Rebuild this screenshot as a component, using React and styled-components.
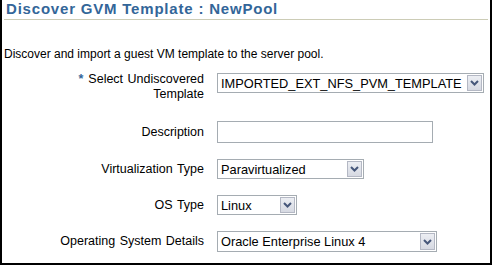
import React from 'react';
import styled, { createGlobalStyle } from 'styled-components';

const GlobalStyle = createGlobalStyle`
  html, body {
    margin: 0;
    padding: 0;
    background: #fff;
  }
  body {
    font-family: "Liberation Sans", Arial, sans-serif;
    color: #000;
  }
`;

const Frame = styled.div`
  box-sizing: border-box;
  width: 492px;
  height: 265px;
  border: 2px solid #000;
  border-top: none;
  background: #fff;
  overflow: hidden;
`;

const Title = styled.h1`
  margin: 0 2px;
  padding: 0 2px 2px;
  font: bold 15px/17px "Liberation Sans", Arial, sans-serif;
  letter-spacing: 0.8px;
  color: #336699;
  border-bottom: 1px solid #ccccb6;
`;

const Intro = styled.p`
  margin: 27px 0 0;
  padding-left: 2px;
  font-size: 12px;
  line-height: 15px;
`;

const Form = styled.div`
  display: grid;
  grid-template-columns: 202px auto;
  column-gap: 13px;
  row-gap: 16px;
  align-items: center;
  justify-items: start;
  margin-top: 11px;
`;

const Label = styled.label`
  justify-self: end;
  text-align: right;
  font-size: 12.5px;
  line-height: 15px;
  word-spacing: 1px;
  ${(p) => p.$top && `
    align-self: start;
    margin: -1px 0 3px;
  `}
`;

const Required = styled.span`
  color: #336699;
  font-weight: bold;
  margin-right: 5px;
`;

const SelectBox = styled.div`
  box-sizing: border-box;
  display: flex;
  align-items: stretch;
  align-self: ${(p) => (p.$top ? 'start' : 'center')};
  width: ${(p) => p.$width}px;
  height: ${(p) => p.$height || 20}px;
  border: 1px solid #a5acb2;
  background: #fff;
  font-size: 12.8px;
`;

const Value = styled.span`
  flex: 1;
  padding-left: 3px;
  display: flex;
  align-items: center;
  white-space: nowrap;
  overflow: hidden;
`;

const ArrowButton = styled.span`
  box-sizing: border-box;
  width: 15px;
  margin: 1px;
  border: 1px solid #b4b8c4;
  background: linear-gradient(#eceef3, #d6d9e2);
  display: flex;
  align-items: center;
  justify-content: center;
`;

const TextInput = styled.input`
  box-sizing: border-box;
  width: 216px;
  height: 22px;
  margin: 0;
  border: 1px solid #a5acb2;
  padding: 0 3px;
  font: 12px "Liberation Sans", Arial, sans-serif;
  outline: none;
`;

const Chevron = () => (
  <svg width="9" height="6" viewBox="0 0 9 6">
    <path d="M1 1 L4.5 4.5 L8 1" fill="none" stroke="#46577a" strokeWidth="2" />
  </svg>
);

const Select = ({ value, width, height, top }) => (
  <SelectBox $width={width} $height={height} $top={top}>
    <Value>{value}</Value>
    <ArrowButton>
      <Chevron />
    </ArrowButton>
  </SelectBox>
);

export default function App() {
  return (
    <>
      <GlobalStyle />
      <Frame>
        <Title>Discover GVM Template : NewPool</Title>
        <Intro>Discover and import a guest VM template to the server pool.</Intro>
        <Form>
          <Label $top>
            <Required>*</Required>Select Undiscovered
            <br />
            Template
          </Label>
          <Select value="IMPORTED_EXT_NFS_PVM_TEMPLATE" width={267} top />

          <Label>Description</Label>
          <TextInput type="text" />

          <Label>Virtualization Type</Label>
          <Select value="Paravirtualized" width={147} />

          <Label>OS Type</Label>
          <Select value="Linux" width={80} />

          <Label>Operating System Details</Label>
          <Select value="Oracle Enterprise Linux 4" width={220} height={21} />
        </Form>
      </Frame>
    </>
  );
}
